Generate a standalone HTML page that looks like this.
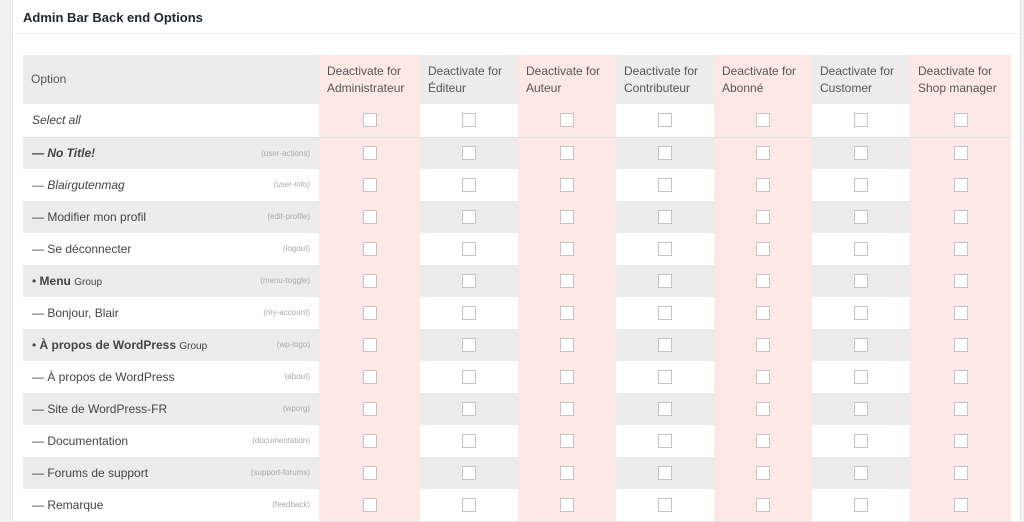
<!DOCTYPE html>
<html><head><meta charset="utf-8"><style>
*{margin:0;padding:0;box-sizing:border-box}
html,body{width:1024px;height:522px;overflow:hidden}
body{background:#f1f1f1;font-family:"Liberation Sans",sans-serif;color:#444;position:relative}
.panel{position:absolute;left:12px;top:0;width:1009px;height:522px;background:#fff;border:1px solid #e5e5e5;border-top:none;overflow:hidden}
.hd{position:absolute;left:0;top:0;width:100%;height:34px;border-bottom:1px solid #eee;font-size:13px;font-weight:bold;color:#23282d;padding:10px 0 0 10px}
table{position:absolute;left:10px;top:55px;border-collapse:collapse;table-layout:fixed;width:988px;font-size:12px}
td{height:32px;padding:0;vertical-align:middle}
tr.h td{height:49px;background:#ececec;color:#555;padding-left:8px;line-height:17px}
tr.h td.p{background:#fde8e6}
tr.s td{height:33px;background:#fff;border-bottom:1px solid #e3e3e3}
tr.g td{background:#ececec}
tr.w td{background:#fff}
td.p{background:#fde8e6 !important}
td.o{padding:0 9px;position:relative}
td.o .k{position:absolute;right:9px;top:11px;font-size:8px;color:#aaa}
.cb{display:block;margin:0 auto;width:14px;height:14px;border:1px solid #c4c4c4;background:#fff}
</style></head><body>
<div class="panel"><div class="hd">Admin Bar Back end Options</div>
<table>
<colgroup><col style="width:296px"><col style="width:101px"><col style="width:98px"><col style="width:98px"><col style="width:98px"><col style="width:98px"><col style="width:98px"><col style="width:101px"></colgroup>
<tr class="h"><td>Option</td><td class="p">Deactivate for Administrateur</td><td>Deactivate for Éditeur</td><td class="p">Deactivate for Auteur</td><td>Deactivate for Contributeur</td><td class="p">Deactivate for Abonné</td><td>Deactivate for Customer</td><td class="p">Deactivate for Shop manager</td></tr>
<tr class="s"><td class="o"><i>Select all</i></td><td class="p"><span class="cb"></span></td><td><span class="cb"></span></td><td class="p"><span class="cb"></span></td><td><span class="cb"></span></td><td class="p"><span class="cb"></span></td><td><span class="cb"></span></td><td class="p"><span class="cb"></span></td></tr>
<tr class="g"><td class="o"><b><i>— No Title!</i></b><span class="k">(user-actions)</span></td><td class="p"><span class="cb"></span></td><td><span class="cb"></span></td><td class="p"><span class="cb"></span></td><td><span class="cb"></span></td><td class="p"><span class="cb"></span></td><td><span class="cb"></span></td><td class="p"><span class="cb"></span></td></tr>
<tr class="w"><td class="o"><i>— Blairgutenmag</i><span class="k"><i>(user-info)</i></span></td><td class="p"><span class="cb"></span></td><td><span class="cb"></span></td><td class="p"><span class="cb"></span></td><td><span class="cb"></span></td><td class="p"><span class="cb"></span></td><td><span class="cb"></span></td><td class="p"><span class="cb"></span></td></tr>
<tr class="g"><td class="o">— Modifier mon profil<span class="k">(edit-profile)</span></td><td class="p"><span class="cb"></span></td><td><span class="cb"></span></td><td class="p"><span class="cb"></span></td><td><span class="cb"></span></td><td class="p"><span class="cb"></span></td><td><span class="cb"></span></td><td class="p"><span class="cb"></span></td></tr>
<tr class="w"><td class="o">— Se déconnecter<span class="k">(logout)</span></td><td class="p"><span class="cb"></span></td><td><span class="cb"></span></td><td class="p"><span class="cb"></span></td><td><span class="cb"></span></td><td class="p"><span class="cb"></span></td><td><span class="cb"></span></td><td class="p"><span class="cb"></span></td></tr>
<tr class="g"><td class="o">• <b>Menu</b> <span style="font-size:10px">Group</span><span class="k">(menu-toggle)</span></td><td class="p"><span class="cb"></span></td><td><span class="cb"></span></td><td class="p"><span class="cb"></span></td><td><span class="cb"></span></td><td class="p"><span class="cb"></span></td><td><span class="cb"></span></td><td class="p"><span class="cb"></span></td></tr>
<tr class="w"><td class="o">— Bonjour, Blair<span class="k">(my-account)</span></td><td class="p"><span class="cb"></span></td><td><span class="cb"></span></td><td class="p"><span class="cb"></span></td><td><span class="cb"></span></td><td class="p"><span class="cb"></span></td><td><span class="cb"></span></td><td class="p"><span class="cb"></span></td></tr>
<tr class="g"><td class="o">• <b>À propos de WordPress</b> <span style="font-size:10px">Group</span><span class="k">(wp-logo)</span></td><td class="p"><span class="cb"></span></td><td><span class="cb"></span></td><td class="p"><span class="cb"></span></td><td><span class="cb"></span></td><td class="p"><span class="cb"></span></td><td><span class="cb"></span></td><td class="p"><span class="cb"></span></td></tr>
<tr class="w"><td class="o">— À propos de WordPress<span class="k">(about)</span></td><td class="p"><span class="cb"></span></td><td><span class="cb"></span></td><td class="p"><span class="cb"></span></td><td><span class="cb"></span></td><td class="p"><span class="cb"></span></td><td><span class="cb"></span></td><td class="p"><span class="cb"></span></td></tr>
<tr class="g"><td class="o">— Site de WordPress-FR<span class="k">(wporg)</span></td><td class="p"><span class="cb"></span></td><td><span class="cb"></span></td><td class="p"><span class="cb"></span></td><td><span class="cb"></span></td><td class="p"><span class="cb"></span></td><td><span class="cb"></span></td><td class="p"><span class="cb"></span></td></tr>
<tr class="w"><td class="o">— Documentation<span class="k">(documentation)</span></td><td class="p"><span class="cb"></span></td><td><span class="cb"></span></td><td class="p"><span class="cb"></span></td><td><span class="cb"></span></td><td class="p"><span class="cb"></span></td><td><span class="cb"></span></td><td class="p"><span class="cb"></span></td></tr>
<tr class="g"><td class="o">— Forums de support<span class="k">(support-forums)</span></td><td class="p"><span class="cb"></span></td><td><span class="cb"></span></td><td class="p"><span class="cb"></span></td><td><span class="cb"></span></td><td class="p"><span class="cb"></span></td><td><span class="cb"></span></td><td class="p"><span class="cb"></span></td></tr>
<tr class="w"><td class="o">— Remarque<span class="k">(feedback)</span></td><td class="p"><span class="cb"></span></td><td><span class="cb"></span></td><td class="p"><span class="cb"></span></td><td><span class="cb"></span></td><td class="p"><span class="cb"></span></td><td><span class="cb"></span></td><td class="p"><span class="cb"></span></td></tr>
</table></div>
</body></html>
